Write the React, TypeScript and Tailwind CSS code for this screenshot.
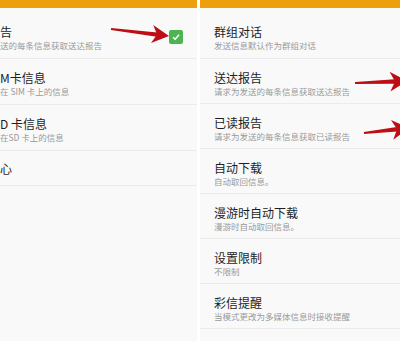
import React from 'react'

const font = { fontFamily: '"Noto Sans CJK SC", "Noto Sans", sans-serif' }

type Row = { title: string; sub?: string }

const leftRows: Row[] = [
  { title: '告', sub: '送的每条信息获取送达报告' },
  { title: 'M卡信息', sub: '在 SIM 卡上的信息' },
  { title: 'D 卡信息', sub: '在SD 卡上的信息' },
  { title: '心' },
]

const rightRows: Row[] = [
  { title: '群组对话', sub: '发送信息默认作为群组对话' },
  { title: '送达报告', sub: '请求为发送的每条信息获取送达报告' },
  { title: '已读报告', sub: '请求为发送的每条信息获取已读报告' },
  { title: '自动下载', sub: '自动取回信息。' },
  { title: '漫游时自动下载', sub: '漫游时自动取回信息。' },
  { title: '设置限制', sub: '不限制' },
  { title: '彩信提醒', sub: '当模式更改为多媒体信息时接收提醒' },
]

function RowText({ row }: { row: Row }) {
  return (
    <div className="whitespace-nowrap">
      <div className="text-[12px] leading-[14px] text-[#1e1e1e]">{row.title}</div>
      {row.sub && <div className="text-[8.5px] leading-[12px] text-[#9a9a9a]">{row.sub}</div>}
    </div>
  )
}

function Check() {
  return (
    <div className="mt-[5px] w-[14px] h-[14px] rounded-[2px] bg-[#4cb552] flex items-center justify-center">
      <svg width="10" height="10" viewBox="0 0 10 10">
        <path d="M2 5.2 L4.2 7.2 L8 2.8" fill="none" stroke="#fff" strokeWidth="1.5" />
      </svg>
    </div>
  )
}

// red hand-drawn style arrow
function Arrow({ x1, y1, x2, y2, head = 17, half = 9 }: { x1: number; y1: number; x2: number; y2: number; head?: number; half?: number }) {
  const len = Math.hypot(x2 - x1, y2 - y1)
  const dx = (x2 - x1) / len
  const dy = (y2 - y1) / len
  const nx = -dy
  const ny = dx
  const bx = x2 - dx * head
  const by = y2 - dy * head
  const mx = x2 - dx * (head - 5)
  const my = y2 - dy * (head - 5)
  const p = (a: number, b: number) => `${a.toFixed(1)},${b.toFixed(1)}`
  const shaft = [
    p(x1 + nx * 1.1, y1 + ny * 1.1),
    p(x1 - nx * 1.1, y1 - ny * 1.1),
    p(mx - nx * 2.2, my - ny * 2.2),
    p(mx + nx * 2.2, my + ny * 2.2),
  ].join(' ')
  const tip = [p(x2, y2), p(bx - nx * half, by - ny * half), p(mx, my), p(bx + nx * half, by + ny * half)].join(' ')
  return (
    <g fill="#bf0d16">
      <polygon points={shaft} />
      <polygon points={tip} />
    </g>
  )
}

export default function App() {
  return (
    <div className="relative w-[400px] h-[341px] bg-white flex gap-[3px] overflow-hidden" style={font}>
      <div className="w-[197px] h-full bg-[#f9f9f9] flex flex-col overflow-hidden">
        <div className="h-[8px] bg-[#eba00c]" />
        {leftRows.map((row, i) => (
          <div
            key={i}
            className={`border-b border-[#ebebeb] flex justify-between items-start pr-[14px] ${
              i === 0 ? 'h-[51px] pt-[17px]' : row.sub ? 'h-[46px] pt-[12px]' : 'h-[35px] pt-[11px]'
            }`}
          >
            <RowText row={row} />
            {i === 0 && <Check />}
          </div>
        ))}
      </div>
      <div className="flex-1 h-full bg-[#f9f9f9] flex flex-col overflow-hidden">
        <div className="h-[8px] bg-[#eba00c]" />
        {rightRows.map((row, i) => (
          <div
            key={i}
            className={`border-b border-[#ebebeb] pl-[14px] ${i === 0 ? 'h-[51px] pt-[17px]' : 'h-[45px] pt-[12px]'}`}
          >
            <RowText row={row} />
          </div>
        ))}
      </div>
      <svg className="absolute inset-0 pointer-events-none" width="400" height="341" viewBox="0 0 400 341">
        <Arrow x1={111} y1={29} x2={169} y2={36} />
        <Arrow x1={355} y1={83} x2={407} y2={81} head={17} half={10} />
        <Arrow x1={364} y1={133} x2={409} y2={128} head={17} half={10} />
      </svg>
    </div>
  )
}
